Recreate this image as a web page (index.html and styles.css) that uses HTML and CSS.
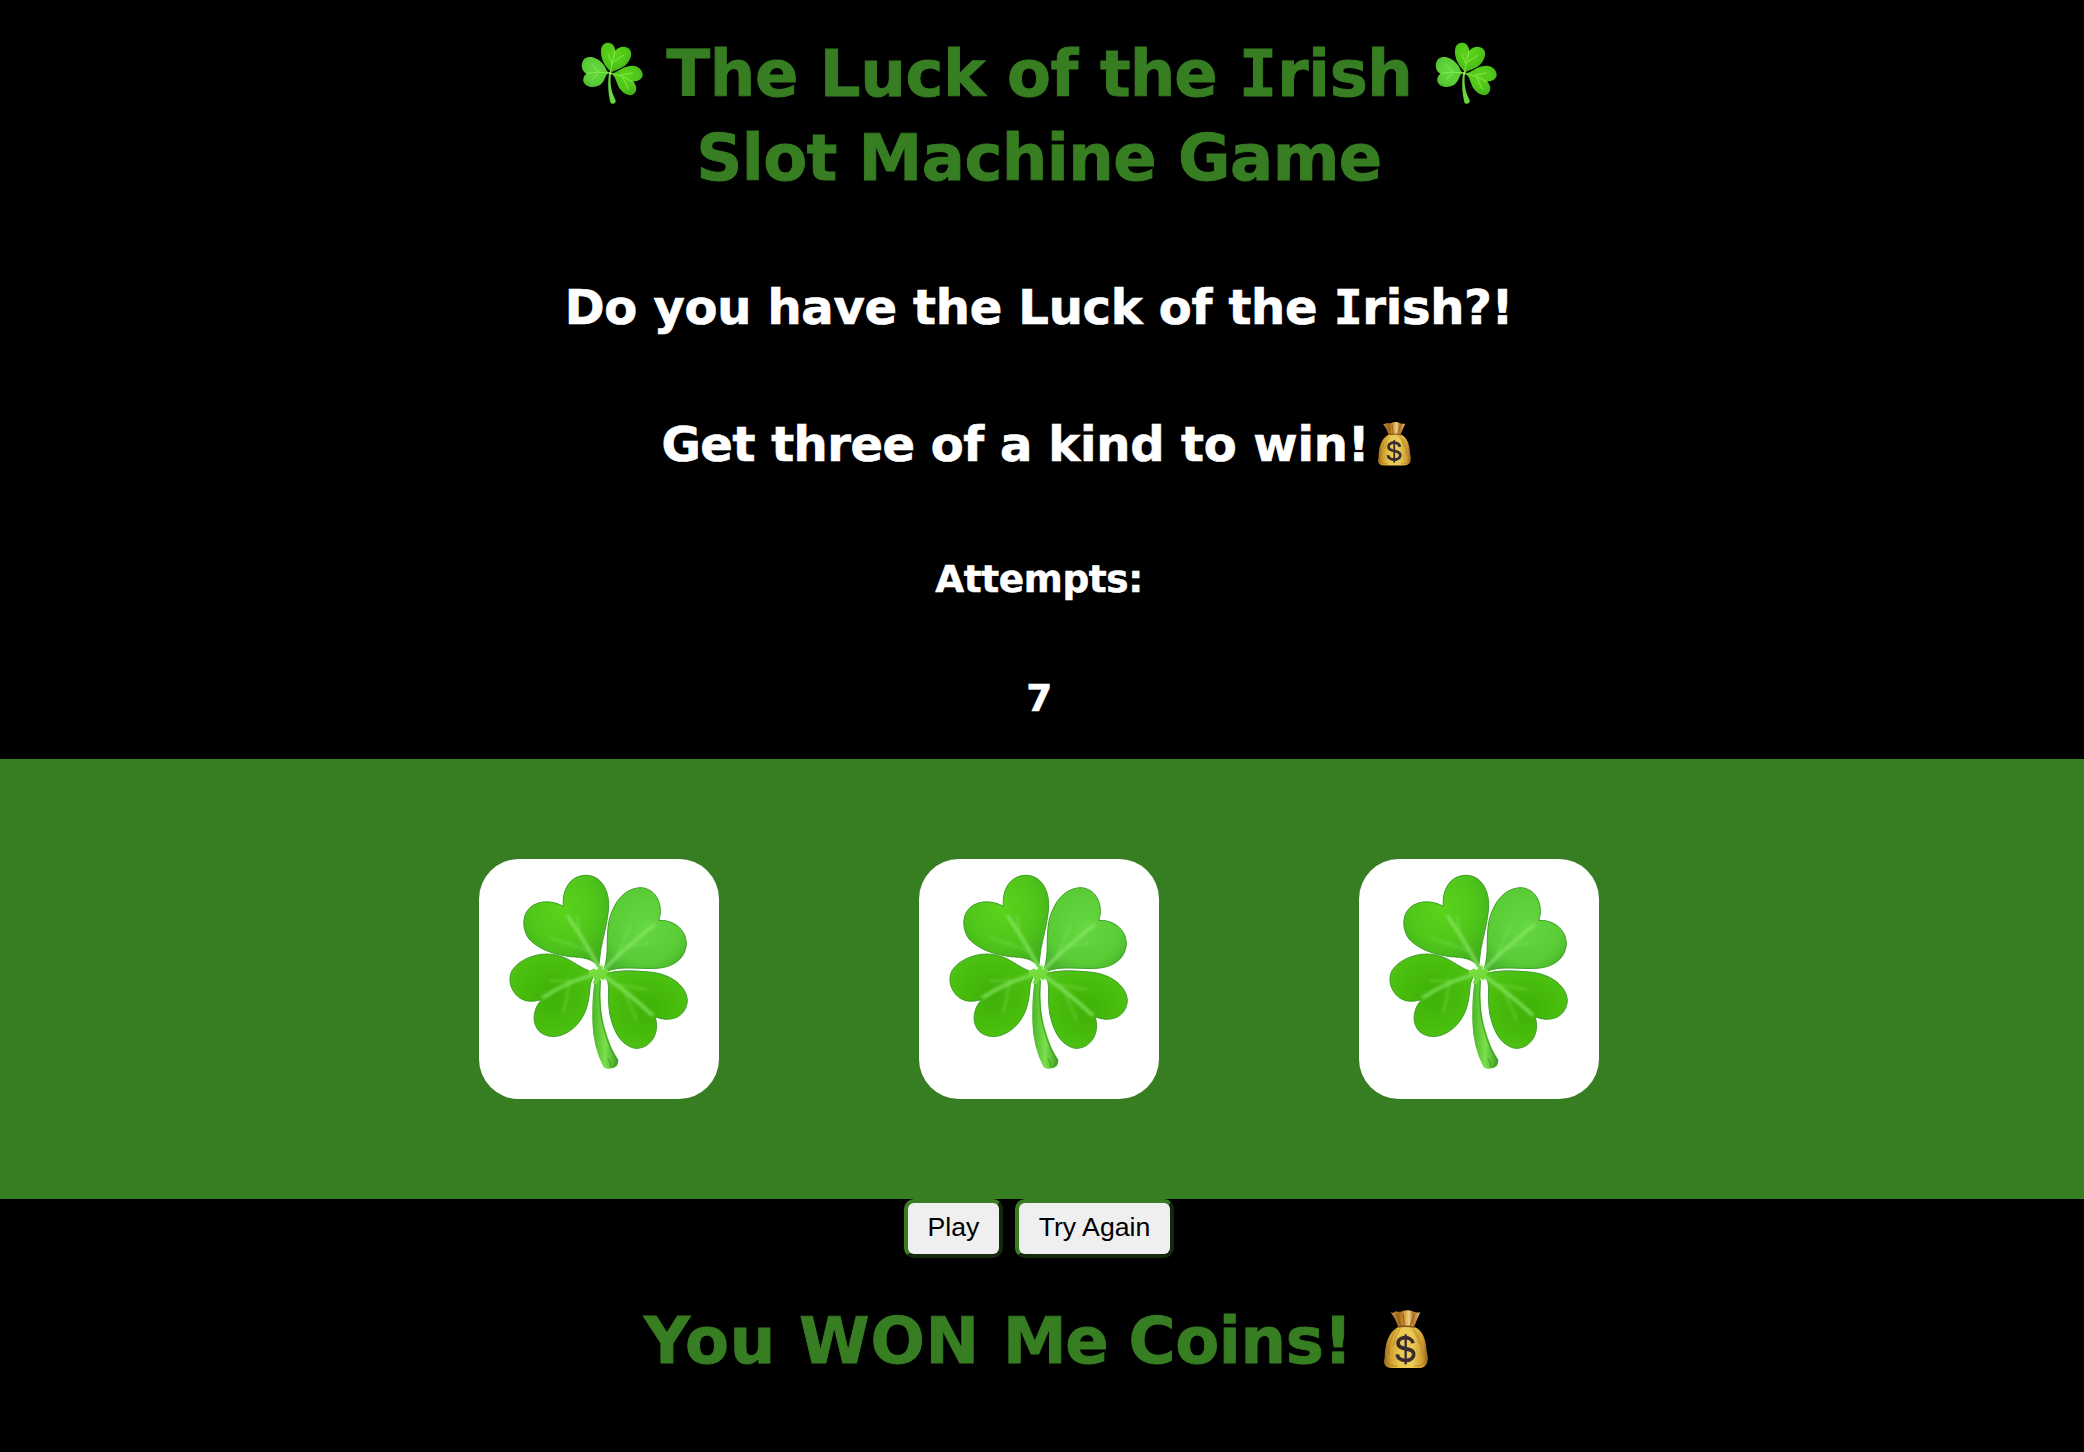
FILE: index.html
```html
<!DOCTYPE html>
<html lang="en">
<head>
<meta charset="utf-8">
<title>The Luck of the Irish</title>
<link rel="stylesheet" href="styles.css">
</head>
<body>
<svg class="defs" aria-hidden="true">
  <defs>
    <radialGradient id="leaf" cx=".45" cy=".35" r=".7">
      <stop offset="0" stop-color="#5cd31c"/><stop offset=".6" stop-color="#4fc51a"/><stop offset="1" stop-color="#41ab1d"/>
    </radialGradient>
    <radialGradient id="leafLight" cx=".5" cy=".45" r=".65">
      <stop offset="0" stop-color="#65d740"/><stop offset=".7" stop-color="#59cb35"/><stop offset="1" stop-color="#45ae2c"/>
    </radialGradient>
    <radialGradient id="leafDark" cx=".5" cy=".5" r=".65">
      <stop offset="0" stop-color="#3eb009"/><stop offset=".6" stop-color="#49bd0c"/><stop offset="1" stop-color="#52c61c"/>
    </radialGradient>
    <linearGradient id="stem" x1="0" x2="1" y1="0" y2="0">
      <stop offset="0" stop-color="#49b526"/><stop offset=".5" stop-color="#7ae04c"/><stop offset="1" stop-color="#3c9c20"/>
    </linearGradient>
    <linearGradient id="gold" x1="0" x2="1" y1="0" y2="0">
      <stop offset="0" stop-color="#97671c"/><stop offset=".15" stop-color="#cf9f30"/><stop offset=".35" stop-color="#e9c850"/><stop offset=".65" stop-color="#ebcb55"/><stop offset=".88" stop-color="#cc9c31"/><stop offset="1" stop-color="#8a5c1b"/>
    </linearGradient>
    <linearGradient id="neck" x1="0" x2="1" y1="0" y2="0">
      <stop offset="0" stop-color="#c28a4a"/><stop offset=".3" stop-color="#a56a19"/><stop offset=".5" stop-color="#dca94b"/><stop offset=".62" stop-color="#efcf8a"/><stop offset=".75" stop-color="#b27722"/><stop offset="1" stop-color="#e0b782"/>
    </linearGradient>
    <filter id="soft" x="-20%" y="-20%" width="140%" height="140%"><feGaussianBlur stdDeviation="4"/></filter>

    <symbol id="four-leaf" viewBox="27 27 720 720">
      <g stroke="#3f9f27" stroke-width="3">
        <path fill="url(#leaf)" d="M386 352C370 325 338 322 301 320C255 314 208 300 177 267C155 236 156 194 181 172C207 150 249 151 280 169C276 121 299 76 348 76C394 76 417 121 416 168C414 218 397 266 391 309Z"/>
        <path fill="url(#leafLight)" d="M403 354C417 312 408 264 416 218C427 164 459 114 513 113C559 116 582 165 566 212C606 207 649 236 649 282C646 329 606 353 558 355C503 358 446 346 411 365Z"/>
        <path fill="url(#leafDark)" d="M374 367C335 361 308 327 262 316C213 303 150 324 126 362C109 396 129 441 167 452C184 456 203 452 215 449C190 474 182 520 210 546C243 572 289 558 319 526C355 490 358 438 361 402Z"/>
        <path fill="url(#leafDark)" d="M401 374C437 358 500 362 547 367C600 373 649 406 652 450C650 500 604 520 555 500C572 548 542 597 496 595C448 586 426 534 418 482C412 436 421 404 409 385Z"/>
      </g>
      <g fill="none" stroke="#8ce968" stroke-linecap="round" filter="url(#soft)">
        <path stroke-width="10" opacity=".8" d="M391 359Q349 282 294 199M397 363Q470 290 553 224M379 372Q290 395 220 442M404 379Q472 425 546 494"/>
        <path stroke-width="6" opacity=".4" d="M354 303Q282 276 242 265M330 255Q326 224 323 198M441 316L480 226M464 292L535 280M304 391L240 393M298 399L280 491M446 404L530 418M462 422L500 511"/>
      </g>
      <path fill="url(#stem)" d="M376 376L392 388Q386 490 412 558Q424 598 445 630Q445 651 427 655Q408 659 401 652Q369 592 367 517Q365 438 376 376Z"/>
      <path fill="none" stroke="#399b23" stroke-width="3" d="M391 391Q383 489 408 559Q420 598 441 631Q438 647 427 654M423 651Q423 637 413 625"/>
      <path fill="#76dc3e" d="M372 355Q384 368 386 347L398 347Q394 363 411 357L418 368Q403 370 407 386L399 391Q389 378 382 402L368 400Q380 376 358 375L354 365Z"/>
    </symbol>

    <symbol id="shamrock" viewBox="33 37 186 188">
      <path fill="url(#leaf)" d="M120 124C105 109 88 83 94 54C99 37 118 35 128 44C133 50 135 56 136 62C147 48 169 47 179 58C189 73 181 91 168 105C154 117 137 121 124 128Z"/>
      <path fill="url(#leafLight)" d="M118 130C104 132 109 148 92 164C76 176 47 174 40 155C38 145 43 137 49 132C33 122 31 100 43 87C58 75 82 83 96 99C109 113 108 124 118 130Z"/>
      <path fill="url(#leaf)" d="M124 132C143 128 157 109 186 108C205 107 220 123 218 138C214 151 201 155 190 155C202 168 202 187 188 195C168 200 151 183 144 168C137 148 134 139 124 132Z"/>
      <path fill="none" stroke="#90f34e" stroke-width="3" opacity=".8" d="M121 128Q128 91 135 65M118 129Q79 124 51 131M124 131Q158 136 188 156M126 102L114 72M130 97L161 76M87 126L64 103M87 128L65 150M151 136L188 129M158 141L176 180"/>
      <path fill="#68d740" d="M117 132L123 132C119 163 124 187 137 211Q138 220 128 222L122 220C114 192 113 159 117 132Z"/>
      <circle cx="121" cy="130" r="4" fill="#a8f55f"/>
    </symbol>

    <symbol id="bag" viewBox="97 52 132 173">
      <path fill="url(#neck)" d="M117 57Q126 60 132 54Q145 58 155 52Q171 48 183 54Q192 59 206 57Q196 78 187 101L140 101Q132 76 117 57Z"/>
      <path fill="none" stroke="#8e5918" stroke-width="3" d="M135 62L147 97M154 60L158 98M188 62L175 98"/>
      <path fill="url(#gold)" d="M140 100Q163 96 189 101C213 110 224 140 225 174Q234 205 221 217Q214 225 197 224L121 224Q103 224 98 211Q96 203 99 193C100 157 106 119 140 100Z"/>
      <path fill="none" stroke="#aa741d" stroke-width="3" opacity=".65" d="M137 104Q113 132 111 185M146 105Q129 126 124 158M184 104Q208 130 213 187M176 106Q194 118 203 151M104 204Q115 220 137 218M220 204Q210 220 188 218"/>
      <path fill="none" stroke="#7b4d18" stroke-width="4" d="M139 101Q162 96 189 102"/>
      <path fill="none" stroke="#382b2f" stroke-width="11" d="M184 150C181 128 140 127 139 149C139 175 187 158 186 184C184 208 138 206 137 183"/>
      <path fill="none" stroke="#382b2f" stroke-width="7" d="M162 123V213"/>
    </symbol>
  </defs>
</svg>

<main class="page">
  <h1 class="title">
    <span class="line first"><svg class="shamrock"><use href="#shamrock"/></svg><span class="title-text">The Luck of <span class="tight">the</span> <span class="slab">I</span>rish</span><svg class="shamrock"><use href="#shamrock"/></svg></span>
    <span class="line subtitle">Slot Machine Game</span>
  </h1>
  <h2 class="question">Do you have the Luck of the <span class="slab">I</span>rish?!</h2>
  <h2 class="goal"><span class="goal-start">Get three of a </span><span class="goal-end">kind to win!</span><svg class="bag-small"><use href="#bag"/></svg></h2>
  <h3 class="attempts">Attempts:</h3>
  <h3 class="count">7</h3>
  <section class="reels">
    <div class="reel"><svg><use href="#four-leaf"/></svg></div>
    <div class="reel"><svg><use href="#four-leaf"/></svg></div>
    <div class="reel"><svg><use href="#four-leaf"/></svg></div>
  </section>
  <div class="controls">
    <button class="play">Play</button>
    <button class="again">Try Again</button>
  </div>
  <h1 class="result"><span class="wide">You WON </span><span class="narrow">Me </span><span>Coins!</span><svg class="bag-large"><use href="#bag"/></svg></h1>
</main>
</body>
</html>
```
FILE: styles.css
```css
* { box-sizing: border-box; }
body {
  margin: 0;
  background: #000;
  color: #fff;
  font-family: Verdana, "DejaVu Sans", sans-serif;
}
.defs { position: absolute; width: 0; height: 0; }
.page {
  display: flex;
  flex-direction: column;
  height: 1452px;
  overflow: hidden;
}
h1, h2, h3 {
  display: flex;
  justify-content: center;
  align-items: center;
  margin: 0;
  padding-right: 6px;
  font-weight: bold;
  white-space: pre;
  -webkit-text-stroke: .014em currentColor;
}
h1 { font-size: 64px; color: #377e22; letter-spacing: -.005em; }
h2 { font-size: 48px; letter-spacing: -.006em; }
h3 { font-size: 37.44px; letter-spacing: -.01em; }
.title { flex-direction: column; height: 200px; padding-top: 32px; justify-content: flex-start; }
.line { display: flex; align-items: center; height: 84px; }
.subtitle { letter-spacing: -.008em; }
.shamrock { width: 62px; height: 63px; margin-bottom: 2px; }
.title-text { margin: 0 22px 0 23px; letter-spacing: -.006em; }
.tight { letter-spacing: -.014em; }
.slab { font-family: "DejaVu Sans Mono", monospace; }
.question { height: 214px; }
.goal { height: 60px; padding-right: 12px; }
.goal-start { letter-spacing: -.01em; }
.goal-end { letter-spacing: -.003em; }
.bag-small { width: 33px; height: 44px; margin-left: 8px; margin-bottom: 1px; }
.attempts { height: 163px; padding-top: 47px; }
.count { height: 122px; }
.reels {
  display: flex;
  justify-content: center;
  align-items: center;
  gap: 200px;
  height: 440px;
  padding-right: 6px;
  background: #377e22;
}
.reel { width: 240px; height: 240px; border-radius: 40px; background: #fff; }
.reel svg { display: block; width: 240px; height: 240px; }
.controls { display: flex; justify-content: center; gap: 12px; height: 59px; padding-right: 6px; }
button {
  height: 59px;
  padding: 0 0 2px;
  border: 4px outset #377e22;
  border-radius: 10px;
  background: #efefef;
  color: #000;
  font: 26.67px "Liberation Sans", Arial, sans-serif;
}
.play { width: 99px; }
.again { width: 159px; }
.result { height: 166px; padding-right: 12px; }
.wide { letter-spacing: .012em; }
.narrow { letter-spacing: -.02em; }
.bag-large { width: 44px; height: 59px; margin-left: 32px; margin-bottom: 3px; }
```
